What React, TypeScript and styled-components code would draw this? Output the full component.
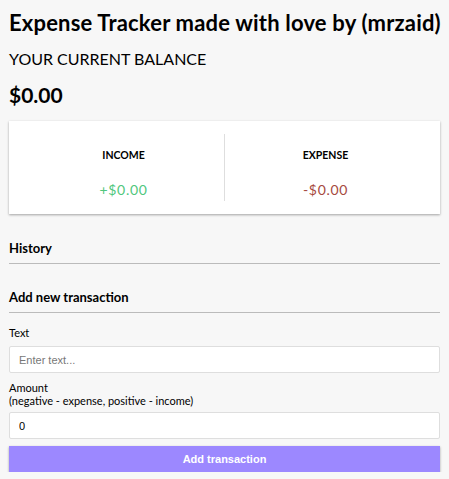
import React, { useState } from 'react';
import styled, { createGlobalStyle } from 'styled-components';

const GlobalStyle = createGlobalStyle`
  * { box-sizing: border-box; }
  body {
    margin: 0;
    background-color: #f7f7f7;
    font-family: Lato, 'Noto Sans', sans-serif;
    color: #000;
  }
`;

const Container = styled.div`
  padding: 9px 9px 0;
`;

const Title = styled.h1`
  margin: 0;
  font-size: 22px;
  font-weight: 700;
  letter-spacing: 0.18px;
  line-height: 28px;
  white-space: nowrap;
`;

const BalanceLabel = styled.h4`
  margin: 13px 0 0;
  font-size: 16px;
  font-weight: 400;
  line-height: 18px;
  text-transform: uppercase;
`;

const Balance = styled.h1`
  margin: 14px 0 0;
  font-size: 21px;
  font-weight: 700;
  line-height: 25px;
`;

const Card = styled.div`
  display: flex;
  background-color: #fff;
  box-shadow: 0 1px 3px rgba(0, 0, 0, 0.12), 0 1px 2px rgba(0, 0, 0, 0.24);
  padding: 13px 14px;
  margin: 14px 0 0;
`;

const Column = styled.div<{ $divider?: boolean }>`
  flex: 1;
  text-align: center;
  padding: 15px 0 3px;
  border-right: ${(p) => (p.$divider ? '1px solid #dedede' : 'none')};
`;

const ColumnLabel = styled.h4`
  margin: 0;
  font-size: 10.5px;
  font-weight: 700;
  line-height: 13px;
  text-transform: uppercase;
`;

const Money = styled.p<{ $tone: 'plus' | 'minus' }>`
  margin: 19px 0 0;
  font-size: 14px;
  line-height: 17px;
  letter-spacing: 0.7px;
  color: ${(p) => (p.$tone === 'plus' ? '#4fc77d' : '#a6493e')};
`;

const SectionTitle = styled.h3<{ $top: number }>`
  margin: ${(p) => p.$top}px 0 0;
  padding-bottom: 7px;
  border-bottom: 1px solid #bbb;
  font-size: 13px;
  font-weight: 700;
  line-height: 16px;
`;

const Form = styled.form`
  display: flex;
  flex-direction: column;
`;

const Label = styled.label<{ $top: number; $bottom: number }>`
  display: block;
  margin: ${(p) => p.$top}px 0 ${(p) => p.$bottom}px;
  font-size: 11px;
  line-height: 13px;
`;

const Input = styled.input`
  display: block;
  width: 100%;
  height: 27px;
  border: 1px solid #dedede;
  border-radius: 2px;
  padding: 0 9px;
  font-family: 'Liberation Sans', Arial, sans-serif;
  font-size: 11px;
  color: #000;
  background: #fff;
  outline: none;

  &::placeholder {
    color: #777;
  }
`;

const Button = styled.button`
  display: block;
  width: 100%;
  height: 26px;
  margin-top: 7px;
  border: 0;
  background-color: #9c88ff;
  box-shadow: 0 1px 3px rgba(0, 0, 0, 0.12), 0 1px 2px rgba(0, 0, 0, 0.24);
  color: #fff;
  font-family: 'Liberation Sans', Arial, sans-serif;
  font-size: 11px;
  font-weight: 700;
  cursor: pointer;
`;

const App: React.FC = () => {
  const [text, setText] = useState('');
  const [amount, setAmount] = useState('0');

  return (
    <Container>
      <GlobalStyle />
      <Title>Expense Tracker made with love by (mrzaid)</Title>
      <BalanceLabel>Your current balance</BalanceLabel>
      <Balance>$0.00</Balance>
      <Card>
        <Column $divider>
          <ColumnLabel>Income</ColumnLabel>
          <Money $tone="plus">+$0.00</Money>
        </Column>
        <Column>
          <ColumnLabel>Expense</ColumnLabel>
          <Money $tone="minus">-$0.00</Money>
        </Column>
      </Card>
      <SectionTitle $top={26}>History</SectionTitle>
      <SectionTitle $top={25}>Add new transaction</SectionTitle>
      <Form onSubmit={(e) => e.preventDefault()}>
        <Label htmlFor="text" $top={13} $bottom={7}>
          Text
        </Label>
        <Input
          id="text"
          type="text"
          placeholder="Enter text..."
          value={text}
          onChange={(e) => setText(e.target.value)}
        />
        <Label htmlFor="amount" $top={8} $bottom={5}>
          Amount <br />
          (negative - expense, positive - income)
        </Label>
        <Input
          id="amount"
          type="number"
          value={amount}
          onChange={(e) => setAmount(e.target.value)}
        />
        <Button type="submit">Add transaction</Button>
      </Form>
    </Container>
  );
};

export default App;
